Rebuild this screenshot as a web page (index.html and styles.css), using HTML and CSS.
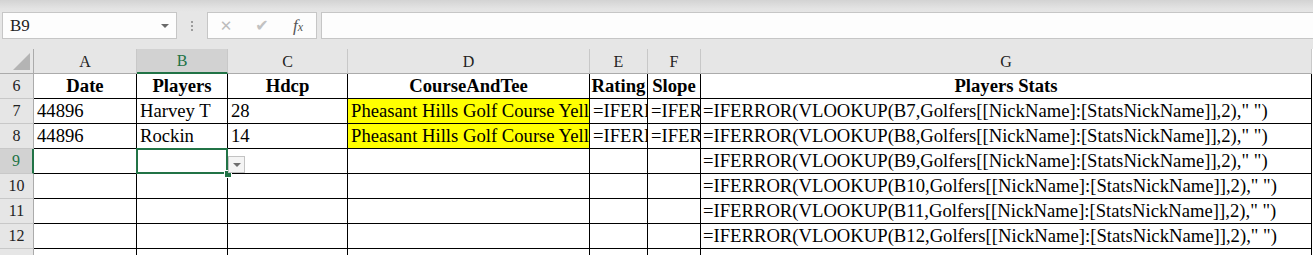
FILE: index.html
```html
<!DOCTYPE html>
<html lang="en">
<head>
  <meta charset="UTF-8">
  <title>Golf sheet</title>
  <link rel="stylesheet" href="styles.css">
</head>
<body>
  <div class="ribbon-edge"></div>

  <!-- formula bar -->
  <div class="formula-bar">
    <div class="name-box">
      <span>B9</span>
      <span class="name-arrow"></span>
    </div>
    <div class="grip"><i></i><i></i><i></i></div>
    <div class="fx-buttons">
      <span class="fx-btn cancel">&#x2715;</span>
      <span class="fx-btn enter">&#x2714;</span>
      <span class="fx-btn fx"><i>f</i><small>x</small></span>
    </div>
    <div class="formula-input"></div>
  </div>

  <!-- sheet grid -->
  <div class="sheet">
    <div class="col-head corner"><span class="corner-tri"></span></div>
    <div class="col-head">A</div>
    <div class="col-head selected">B</div>
    <div class="col-head">C</div>
    <div class="col-head">D</div>
    <div class="col-head">E</div>
    <div class="col-head">F</div>
    <div class="col-head">G</div>

    <div class="row-head">6</div>
    <div class="cell th">Date</div>
    <div class="cell th">Players</div>
    <div class="cell th">Hdcp</div>
    <div class="cell th">CourseAndTee</div>
    <div class="cell th">Rating</div>
    <div class="cell th">Slope</div>
    <div class="cell th">Players Stats</div>

    <div class="row-head">7</div>
    <div class="cell">44896</div>
    <div class="cell">Harvey T</div>
    <div class="cell">28</div>
    <div class="cell hl">Pheasant Hills Golf Course Yellow</div>
    <div class="cell">=IFERROR(</div>
    <div class="cell">=IFERROR(</div>
    <div class="cell g">=IFERROR(VLOOKUP(B7,Golfers[[NickName]:[StatsNickName]],2)," ")</div>

    <div class="row-head">8</div>
    <div class="cell">44896</div>
    <div class="cell">Rockin</div>
    <div class="cell">14</div>
    <div class="cell hl">Pheasant Hills Golf Course Yellow</div>
    <div class="cell">=IFERROR(</div>
    <div class="cell">=IFERROR(</div>
    <div class="cell g">=IFERROR(VLOOKUP(B8,Golfers[[NickName]:[StatsNickName]],2)," ")</div>

    <div class="row-head selected">9</div>
    <div class="cell"></div>
    <div class="cell active">
      <span class="sel-box"></span>
      <span class="fill-handle"></span>
      <span class="cell-drop"></span>
    </div>
    <div class="cell"></div>
    <div class="cell"></div>
    <div class="cell"></div>
    <div class="cell"></div>
    <div class="cell g">=IFERROR(VLOOKUP(B9,Golfers[[NickName]:[StatsNickName]],2)," ")</div>

    <div class="row-head">10</div>
    <div class="cell"></div>
    <div class="cell"></div>
    <div class="cell"></div>
    <div class="cell"></div>
    <div class="cell"></div>
    <div class="cell"></div>
    <div class="cell g">=IFERROR(VLOOKUP(B10,Golfers[[NickName]:[StatsNickName]],2)," ")</div>

    <div class="row-head">11</div>
    <div class="cell"></div>
    <div class="cell"></div>
    <div class="cell"></div>
    <div class="cell"></div>
    <div class="cell"></div>
    <div class="cell"></div>
    <div class="cell g">=IFERROR(VLOOKUP(B11,Golfers[[NickName]:[StatsNickName]],2)," ")</div>

    <div class="row-head">12</div>
    <div class="cell"></div>
    <div class="cell"></div>
    <div class="cell"></div>
    <div class="cell"></div>
    <div class="cell"></div>
    <div class="cell"></div>
    <div class="cell g">=IFERROR(VLOOKUP(B12,Golfers[[NickName]:[StatsNickName]],2)," ")</div>

    <div class="row-head">13</div>
    <div class="cell"></div>
    <div class="cell"></div>
    <div class="cell"></div>
    <div class="cell"></div>
    <div class="cell"></div>
    <div class="cell"></div>
    <div class="cell"></div>
  </div>
</body>
</html>
```

FILE: styles.css
```css
/* ---------- base ---------- */
* {
  box-sizing: border-box;
  margin: 0;
  padding: 0;
}
html, body {
  height: 255px;
}
body {
  background: #e6e6e6;
  font-family: "Liberation Serif", "Times New Roman", serif;
  color: #000;
  overflow: hidden;
}

.ribbon-edge {
  height: 12px;
  background: linear-gradient(#d3d3d3, #e3e3e3 70%, #e6e6e6);
}

/* ---------- formula bar ---------- */
.formula-bar {
  display: flex;
  height: 27px;
  padding-left: 2px;
}
.name-box {
  width: 175px;
  background: #fdfdfd;
  border: 1px solid #c6c6c6;
  display: flex;
  align-items: center;
  justify-content: space-between;
  padding: 0 7px 0 7px;
  font-family: "Liberation Serif", serif;
  font-size: 17px;
  color: #222;
}
.name-arrow {
  width: 0;
  height: 0;
  border-left: 4px solid transparent;
  border-right: 4px solid transparent;
  border-top: 4px solid #6a6a6a;
}
.grip {
  width: 30px;
  display: flex;
  flex-direction: column;
  align-items: center;
  justify-content: center;
  gap: 2px;
}
.grip i {
  width: 2px;
  height: 2px;
  background: #9c9c9c;
}
.fx-buttons {
  width: 110px;
  background: #fdfdfd;
  border: 1px solid #c6c6c6;
  display: flex;
  align-items: center;
}
.fx-btn {
  width: 37px;
  text-align: center;
  color: #bdbdbd;
  font-family: "DejaVu Sans", sans-serif;
  font-size: 15px;
}
.fx-btn.enter {
  font-size: 16px;
  color: #c2c2c2;
}
.fx-btn.fx {
  color: #555;
  font-family: "Liberation Serif", serif;
  font-size: 17px;
}
.fx-btn.fx small {
  font-size: 12px;
  font-style: italic;
}
.formula-input {
  flex: 1;
  margin-left: 4px;
  background: #fdfdfd;
  border: 1px solid #c6c6c6;
  border-right: none;
}

/* ---------- sheet ---------- */
.sheet {
  margin-top: 10px;
  display: grid;
  grid-template-columns: 34px 103px 91px 120px 242px 58px 53px 611px;
  grid-auto-rows: 25px;
  background: #fff;
}
.col-head {
  background: #e6e6e6;
  border-right: 1px solid #c8c8c8;
  border-bottom: 1px solid #ababab;
  display: flex;
  align-items: center;
  justify-content: center;
  font-size: 16px;
  color: #222;
  padding-top: 1px;
}
.col-head.corner {
  position: relative;
  border-right: 1px solid #ababab;
}
.corner-tri {
  position: absolute;
  right: 3px;
  bottom: 3px;
  width: 0;
  height: 0;
  border-left: 17px solid transparent;
  border-bottom: 17px solid #b4b4b4;
}
.col-head.selected {
  background: #d2d2d2;
  color: #217346;
  border-bottom: 2px solid #217346;
}
.row-head {
  background: #e6e6e6;
  border-right: 1px solid #ababab;
  border-bottom: 1px solid #c8c8c8;
  display: flex;
  align-items: center;
  justify-content: center;
  font-size: 16px;
  color: #222;
}
.row-head.selected {
  background: #d2d2d2;
  color: #217346;
  border-right: 2px solid #217346;
}

.cell {
  position: relative;
  border-right: 1px solid #000;
  border-bottom: 1px solid #000;
  font-size: 18.67px;
  line-height: 22px;
  padding: 1px 0 0 3px;
  white-space: nowrap;
  overflow: hidden;
}
.cell.th {
  font-weight: bold;
  text-align: center;
  padding-left: 0;
}
.cell.g {
  padding-left: 2px;
}
.cell.hl {
  background: #ffff00;
}

/* ---------- active cell B9 ---------- */
.cell.active {
  overflow: visible;
  z-index: 2;
}
.sel-box {
  position: absolute;
  left: -1px;
  top: -1px;
  right: -1px;
  bottom: -1px;
  border: 2px solid #217346;
}
.fill-handle {
  position: absolute;
  right: -4px;
  bottom: -4px;
  width: 6px;
  height: 6px;
  background: #217346;
  outline: 1px solid #fff;
}
.cell-drop {
  position: absolute;
  left: calc(100% + 1px);
  top: 7px;
  width: 17px;
  height: 17px;
  background: #f4f4f4;
  border: 1px solid #c3c3c3;
}
.cell-drop::after {
  content: "";
  position: absolute;
  left: 4px;
  top: 6px;
  border-left: 4px solid transparent;
  border-right: 4px solid transparent;
  border-top: 4px solid #6e6e6e;
}
```
